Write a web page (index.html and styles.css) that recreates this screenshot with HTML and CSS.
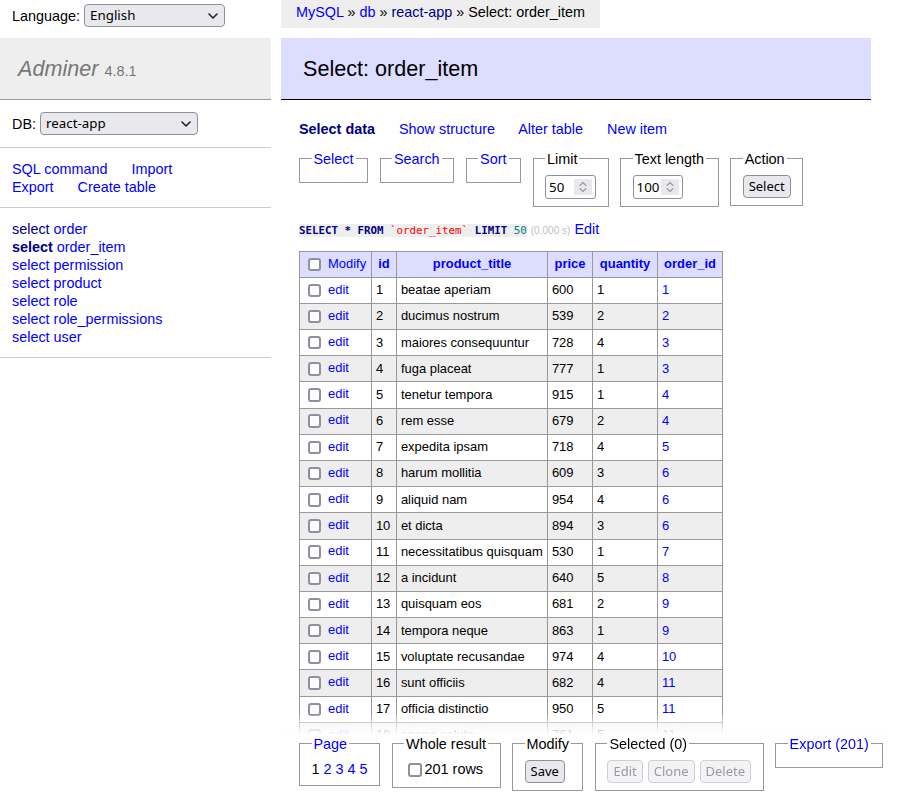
FILE: index.html
```html
<!DOCTYPE html>
<html lang="en">
<head>
<meta charset="utf-8">
<title>Select: order_item - react-app - Adminer</title>
<link rel="stylesheet" href="styles.css">
</head>
<body>
<div class="page">
  <aside class="menu">
    <form class="lang">
      <label class="lang-label" for="lang">Language:</label>
      <span class="selwrap lang-wrap">
        <select id="lang" class="sel"><option>English</option></select>
        <svg class="chev" width="10" height="6" viewBox="0 0 10 6"><path d="M1 1 L5 5 L9 1" fill="none" stroke="#222" stroke-width="1.6" stroke-linecap="round" stroke-linejoin="round"/></svg>
      </span>
    </form>
    <h1 class="brand"><a class="brand-name" href="#">Adminer</a> <span class="version">4.8.1</span></h1>
    <form class="dbs">
      <span class="db-label">DB:</span>
      <span class="selwrap db-wrap">
        <select class="sel"><option>react-app</option></select>
        <svg class="chev" width="10" height="6" viewBox="0 0 10 6"><path d="M1 1 L5 5 L9 1" fill="none" stroke="#222" stroke-width="1.6" stroke-linecap="round" stroke-linejoin="round"/></svg>
      </span>
    </form>
    <p class="menu-links"><a href="#sql">SQL command</a> <a href="#import">Import</a><br><a href="#dump">Export</a> <a href="#create">Create table</a></p>
    <ul class="tables">
      <li><a class="nav" href="#s1">select</a> <a href="#t1">order</a></li>
      <li><a class="nav active" href="#s2">select</a> <a href="#t2">order_item</a></li>
      <li><a href="#s3">select</a> <a href="#t3">permission</a></li>
      <li><a href="#s4">select</a> <a href="#t4">product</a></li>
      <li><a href="#s5">select</a> <a href="#t5">role</a></li>
      <li><a href="#s6">select</a> <a href="#t6">role_permissions</a></li>
      <li><a href="#s7">select</a> <a href="#t7">user</a></li>
    </ul>
  </aside>

  <main class="content">
    <div class="breadcrumb"><a href="#mysql">MySQL</a> » <a href="#db">db</a> » <a class="nav" href="#react">react-app</a> » Select: order_item</div>
    <h2 class="title">Select: order_item</h2>

    <p class="tabs"><a class="nav active" href="#select">Select data</a> <a href="#structure">Show structure</a> <a href="#alter">Alter table</a> <a href="#new">New item</a></p>

    <form class="controls">
      <fieldset class="box"><legend><a href="#f-select">Select</a></legend></fieldset>
      <fieldset class="box"><legend><a href="#f-search">Search</a></legend></fieldset>
      <fieldset class="box"><legend><a href="#f-sort">Sort</a></legend></fieldset>
      <fieldset class="box"><legend>Limit</legend>
        <span class="numbox w51"><input class="num-in" type="text" value="50"><span class="spin"><svg width="18" height="16" viewBox="0 0 18 16"><path d="M6 6.5 L9 3.5 L12 6.5 M6 9.5 L9 12.5 L12 9.5" fill="none" stroke="#9a9aa6" stroke-width="1.1" stroke-linecap="round" stroke-linejoin="round"/></svg></span></span>
      </fieldset>
      <fieldset class="box"><legend>Text length</legend>
        <span class="numbox w50"><input class="num-in" type="text" value="100"><span class="spin"><svg width="18" height="16" viewBox="0 0 18 16"><path d="M6 6.5 L9 3.5 L12 6.5 M6 9.5 L9 12.5 L12 9.5" fill="none" stroke="#9a9aa6" stroke-width="1.1" stroke-linecap="round" stroke-linejoin="round"/></svg></span></span>
      </fieldset>
      <fieldset class="box"><legend>Action</legend><input class="btn" type="submit" value="Select"></fieldset>
    </form>

    <p class="query"><code class="sql"><b class="kw">SELECT</b> <b class="kw">*</b> <b class="kw">FROM</b> <span class="bac">`order_item`</span> <b class="kw">LIMIT</b> <span class="num-lit">50</span></code> <span class="time">(0.000 s)</span> <a href="#edit">Edit</a></p>

    <table class="grid">
      <colgroup><col class="c1"><col class="c2"><col class="c3"><col class="c4"><col class="c5"><col class="c6"></colgroup>
      <thead>
        <tr><td class="chk"><input class="cb" type="checkbox"> <a href="#modify">Modify</a></td><th><a href="#id">id</a></th><th><a href="#pt">product_title</a></th><th><a href="#price">price</a></th><th><a href="#qty">quantity</a></th><th><a href="#oid">order_id</a></th></tr>
      </thead>
      <tbody>
        <tr><td class="chk"><input class="cb" type="checkbox"> <a href="#e1">edit</a></td><td>1</td><td>beatae aperiam</td><td>600</td><td>1</td><td><a href="#o1">1</a></td></tr>
        <tr><td class="chk"><input class="cb" type="checkbox"> <a href="#e2">edit</a></td><td>2</td><td>ducimus nostrum</td><td>539</td><td>2</td><td><a href="#o2">2</a></td></tr>
        <tr><td class="chk"><input class="cb" type="checkbox"> <a href="#e3">edit</a></td><td>3</td><td>maiores consequuntur</td><td>728</td><td>4</td><td><a href="#o3">3</a></td></tr>
        <tr><td class="chk"><input class="cb" type="checkbox"> <a href="#e4">edit</a></td><td>4</td><td>fuga placeat</td><td>777</td><td>1</td><td><a href="#o3">3</a></td></tr>
        <tr><td class="chk"><input class="cb" type="checkbox"> <a href="#e5">edit</a></td><td>5</td><td>tenetur tempora</td><td>915</td><td>1</td><td><a href="#o4">4</a></td></tr>
        <tr><td class="chk"><input class="cb" type="checkbox"> <a href="#e6">edit</a></td><td>6</td><td>rem esse</td><td>679</td><td>2</td><td><a href="#o4">4</a></td></tr>
        <tr><td class="chk"><input class="cb" type="checkbox"> <a href="#e7">edit</a></td><td>7</td><td>expedita ipsam</td><td>718</td><td>4</td><td><a href="#o5">5</a></td></tr>
        <tr><td class="chk"><input class="cb" type="checkbox"> <a href="#e8">edit</a></td><td>8</td><td>harum mollitia</td><td>609</td><td>3</td><td><a href="#o6">6</a></td></tr>
        <tr><td class="chk"><input class="cb" type="checkbox"> <a href="#e9">edit</a></td><td>9</td><td>aliquid nam</td><td>954</td><td>4</td><td><a href="#o6">6</a></td></tr>
        <tr><td class="chk"><input class="cb" type="checkbox"> <a href="#e10">edit</a></td><td>10</td><td>et dicta</td><td>894</td><td>3</td><td><a href="#o6">6</a></td></tr>
        <tr><td class="chk"><input class="cb" type="checkbox"> <a href="#e11">edit</a></td><td>11</td><td>necessitatibus quisquam</td><td>530</td><td>1</td><td><a href="#o7">7</a></td></tr>
        <tr><td class="chk"><input class="cb" type="checkbox"> <a href="#e12">edit</a></td><td>12</td><td>a incidunt</td><td>640</td><td>5</td><td><a href="#o8">8</a></td></tr>
        <tr><td class="chk"><input class="cb" type="checkbox"> <a href="#e13">edit</a></td><td>13</td><td>quisquam eos</td><td>681</td><td>2</td><td><a href="#o9">9</a></td></tr>
        <tr><td class="chk"><input class="cb" type="checkbox"> <a href="#e14">edit</a></td><td>14</td><td>tempora neque</td><td>863</td><td>1</td><td><a href="#o9">9</a></td></tr>
        <tr><td class="chk"><input class="cb" type="checkbox"> <a href="#e15">edit</a></td><td>15</td><td>voluptate recusandae</td><td>974</td><td>4</td><td><a href="#o10">10</a></td></tr>
        <tr><td class="chk"><input class="cb" type="checkbox"> <a href="#e16">edit</a></td><td>16</td><td>sunt officiis</td><td>682</td><td>4</td><td><a href="#o11">11</a></td></tr>
        <tr><td class="chk"><input class="cb" type="checkbox"> <a href="#e17">edit</a></td><td>17</td><td>officia distinctio</td><td>950</td><td>5</td><td><a href="#o11">11</a></td></tr>
        <tr><td class="chk"><input class="cb" type="checkbox"> <a href="#e18">edit</a></td><td>18</td><td>saepe soluta</td><td>761</td><td>5</td><td><a href="#o11">11</a></td></tr>
        <tr><td class="chk"><input class="cb" type="checkbox"> <a href="#e19">edit</a></td><td>19</td><td>quia dolor</td><td>512</td><td>3</td><td><a href="#o12">12</a></td></tr>
        <tr><td class="chk"><input class="cb" type="checkbox"> <a href="#e20">edit</a></td><td>20</td><td>nemo enim</td><td>437</td><td>2</td><td><a href="#o12">12</a></td></tr>
      </tbody>
    </table>

    <div class="footer">
      <div class="footer-row">
        <fieldset class="box"><legend><a href="#page">Page</a></legend><div class="pages">1 <a href="#p2">2</a> <a href="#p3">3</a> <a href="#p4">4</a> <a href="#p5">5</a></div></fieldset>
        <fieldset class="box"><legend>Whole result</legend><label class="whole"><input class="cb" type="checkbox">201 rows</label></fieldset>
        <fieldset class="box"><legend>Modify</legend><input class="btn" type="submit" value="Save"></fieldset>
        <fieldset class="box"><legend>Selected (0)</legend><div class="btns"><input class="btn" type="submit" value="Edit" disabled><input class="btn" type="submit" value="Clone" disabled><input class="btn" type="submit" value="Delete" disabled></div></fieldset>
        <fieldset class="box"><legend><a href="#export">Export (201)</a></legend></fieldset>
      </div>
    </div>
  </main>
</div>
</body>
</html>
```

FILE: styles.css
```css
html {
  overflow: hidden;
}

body {
  margin: 0;
  color: #000;
  background: #fff;
  font: 14.4px/18px "Liberation Sans", Arial, sans-serif;
}

a {
  color: #00f;
  text-decoration: none;
}

a.nav {
  color: #000080;
}

.active {
  font-weight: bold;
}

.page {
  display: flex;
  align-items: flex-start;
  height: 792px;
  overflow: hidden;
}

/* ---------- form controls (Firefox-like look) ---------- */
.selwrap {
  position: relative;
  display: inline-block;
  height: 23px;
}

.sel {
  -webkit-appearance: none;
  appearance: none;
  width: 100%;
  height: 23px;
  margin: 0;
  padding: 0 20px 0 5px;
  box-sizing: border-box;
  border: 1px solid #8f8f9d;
  border-radius: 4px;
  background: #e9e9ed;
  color: #000;
  font: 13.333px/21px "Noto Sans", sans-serif;
}

.chev {
  position: absolute;
  right: 7px;
  top: 9px;
  pointer-events: none;
}

.lang-wrap { width: 141px; }
.db-wrap { width: 158px; }

.btn {
  -webkit-appearance: none;
  appearance: none;
  height: 23px;
  margin: 0;
  padding: 0 5px;
  border: 1px solid #8f8f9d;
  border-radius: 4px;
  background: #e9e9ed;
  color: #000;
  font: 13px/21px "Noto Sans", sans-serif;
  vertical-align: middle;
}

.btn:disabled {
  background: #f3f3f5;
  border-color: #cfcfd6;
  color: #9b9b9f;
}

.cb {
  -webkit-appearance: none;
  appearance: none;
  width: 13.5px;
  height: 13.5px;
  margin: 3px 3px 3px 4px;
  box-sizing: border-box;
  border: 2px solid #8f8f9d;
  border-radius: 3px;
  background: #fff;
  vertical-align: middle;
}

.numbox {
  display: inline-flex;
  align-items: center;
  height: 24px;
  box-sizing: border-box;
  padding: 0 3px 0 1px;
  border: 1px solid #8f8f9d;
  border-radius: 3px;
  background: #fff;
  vertical-align: middle;
}

.w51 { width: 51px; }
.w50 { width: 50px; }

.num-in {
  flex: 1;
  min-width: 0;
  height: 20px;
  margin: 0;
  padding: 0 0 0 2px;
  border: 0;
  outline: none;
  background: transparent;
  color: #000;
  font: 13.333px/20px "Noto Sans", sans-serif;
}

.spin {
  flex: none;
  display: flex;
  width: 18px;
  height: 16px;
  background: #e9e9ed;
}

/* ---------- left menu ---------- */
.menu {
  flex: none;
  width: 271px;
}

.lang {
  height: 38px;
  box-sizing: border-box;
  padding: 4px 12px 0;
  display: flex;
  align-items: flex-start;
  gap: 4px;
  margin: 0;
}

.lang-label {
  line-height: 24px;
}

.brand {
  margin: 0;
  height: 62px;
  box-sizing: border-box;
  padding: 17px 18px;
  font-size: 21.6px;
  line-height: 27px;
  font-weight: normal;
  color: #777;
  background: #eee;
  border-bottom: 1px solid #999;
}

.brand-name {
  color: #777;
  font-style: italic;
}

.version {
  color: #777;
  font-size: 14.5px;
}

.dbs {
  height: 47px;
  margin: 0;
  padding: 0 12px;
  display: flex;
  align-items: center;
  gap: 4px;
  border-bottom: 1px solid #ccc;
}

.menu-links {
  margin: 0;
  padding: 11.5px 12px;
  border-bottom: 1px solid #ccc;
}

.menu-links a {
  margin-right: 20px;
  white-space: nowrap;
}

.tables {
  list-style: none;
  margin: 0;
  padding: 11.5px 12px;
  border-bottom: 1px solid #ccc;
  white-space: nowrap;
}

/* ---------- main ---------- */
.content {
  flex: none;
  width: 610px;
  box-sizing: border-box;
  padding-right: 20px;
  height: 792px;
  overflow: hidden;
  margin-left: 10px;
  display: flex;
  flex-direction: column;
  align-items: flex-start;
}

.breadcrumb {
  flex: none;
  height: 28px;
  line-height: 25px;
  padding: 0 15px;
  background: #eee;
  white-space: nowrap;
}

.title {
  flex: none;
  align-self: stretch;
  margin: 10px 0 20px;
  padding: 17px 22px;
  font-size: 21.6px;
  line-height: 27px;
  font-weight: normal;
  color: #000;
  background: #ddf;
  border-bottom: 1px solid #000;
}

.tabs {
  flex: none;
  margin: 0 0 0 18px;
}

.tabs a {
  margin-right: 20px;
}

.controls {
  flex: none;
  margin: 11.5px 0 0 18px;
  display: flex;
  align-items: flex-start;
  gap: 11.5px;
}

.box {
  margin: 0;
  padding: 7.2px 11.5px;
  border: 1px solid #999;
  min-width: 0;
}

.box legend {
  padding: 0 2px;
  line-height: 18px;
}

.query {
  flex: none;
  margin: 13px 0 0 18px;
}

.sql {
  font-family: "DejaVu Sans Mono", monospace;
  font-size: 10.8px;
  background: #eee;
  color: #000;
}

.kw {
  color: #000080;
  font-weight: bold;
}

.bac {
  color: red;
}

.num-lit {
  color: #007f7f;
}

.time {
  color: silver;
  font-size: 10.08px;
}

/* ---------- grid ---------- */
.grid {
  flex: none;
  margin: 11px 0 0 18px;
  border-collapse: collapse;
  table-layout: fixed;
  width: 423px;
  font-size: 12.96px;
  line-height: 16.2px;
}

.c1 { width: 72px; }
.c2 { width: 25px; }
.c3 { width: 151px; }
.c4 { width: 45px; }
.c5 { width: 65px; }
.c6 { width: 65px; }

.grid td,
.grid th {
  border: 1px solid #999;
  padding: 2.6px 3.9px;
  text-align: left;
  white-space: nowrap;
  overflow: hidden;
}

.grid thead tr {
  height: 25.8px;
}

.grid tbody tr {
  height: 26.2px;
}

.grid thead td,
.grid thead th {
  background: #ddf;
}

.grid thead th {
  text-align: center;
  font-weight: bold;
}

.grid tbody tr:nth-child(2n) {
  background: #eee;
}

/* ---------- footer ---------- */
.footer {
  position: sticky;
  bottom: 0;
  flex: none;
  align-self: stretch;
  margin-right: -20px;
  padding-top: 20px;
  background: linear-gradient(rgba(255, 255, 255, 0.2), #fff 20px, #fff);
}

.footer-row {
  margin-left: 18px;
  padding-bottom: 1px;
  display: flex;
  align-items: flex-start;
  gap: 11.5px;
  background: #fff;
}

.whole {
  display: inline-block;
  line-height: 19px;
}

.btns {
  display: flex;
  gap: 5px;
}
```
